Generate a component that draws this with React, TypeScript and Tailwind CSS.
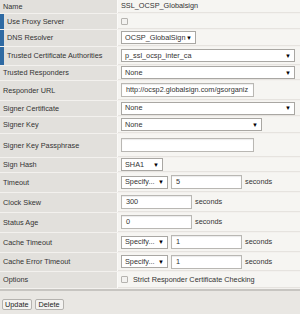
import React from 'react';

const font = { fontFamily: '"Liberation Sans", Arial, sans-serif' };

function Sel({ text, w }: { text: string; w: string }) {
  return (
    <div className={`${w} h-[13px] bg-white border border-[#a9a7a3] flex items-center justify-between pl-[3px] pr-[3px]`}>
      <span className="whitespace-nowrap leading-[10px]">{text}</span>
      <span className="text-[6px] leading-none text-black">▼</span>
    </div>
  );
}

function Inp({ value, w }: { value: string; w: string }) {
  return (
    <div className={`${w} h-[14px] bg-white border border-[#b9b7b3] shadow-[inset_0_1px_1px_rgba(0,0,0,0.08)] flex items-center pl-[4px] overflow-hidden whitespace-nowrap leading-[10px]`}>
      {value}
    </div>
  );
}

function Box() {
  return <div className="w-[7px] h-[7px] border border-[#b5b3af] bg-[#f3f2f0] rounded-[1px]" />;
}

function Row({ label, h, accent, children }: { label: string; h: string; accent?: boolean; children: React.ReactNode }) {
  return (
    <div className={`flex ${h} border-b border-[#f3f1ee]`}>
      <div className="w-[118px] flex bg-[#e2e0dc] border-r border-[#fbfaf8]">
        {accent && <div className="w-[4px] bg-[#2f6aa3]" />}
        <div className="flex items-center pl-[3px] leading-[10px]">{label}</div>
      </div>
      <div className="flex-1 flex items-center gap-[3px] pl-[3px] bg-[#f6f5f2] border-b border-[#e6e3df] leading-[10px]">{children}</div>
    </div>
  );
}

export default function App() {
  return (
    <div className="w-[300px] h-[314px] bg-[#e9e7e3] text-[7.3px] text-[#333] leading-none" style={font}>
      <div className="border-b-[2px] border-[#c7c5c1]">
        <Row label="Name" h="h-[14px]">
          <span>SSL_OCSP_Globalsign</span>
        </Row>
        <Row label="Use Proxy Server" h="h-[16px]" accent>
          <Box />
        </Row>
        <Row label="DNS Resolver" h="h-[17px]" accent>
          <Sel text="OCSP_GlobalSign" w="w-[75px]" />
        </Row>
        <Row label="Trusted Certificate Authorities" h="h-[19px]" accent>
          <Sel text="p_ssl_ocsp_inter_ca" w="w-[174px]" />
        </Row>
        <Row label="Trusted Responders" h="h-[15px]">
          <Sel text="None" w="w-[174px]" />
        </Row>
        <Row label="Responder URL" h="h-[20px]">
          <Inp value="http://ocsp2.globalsign.com/gsorganiz" w="w-[133px]" />
        </Row>
        <Row label="Signer Certificate" h="h-[16px]">
          <Sel text="None" w="w-[174px]" />
        </Row>
        <Row label="Signer Key" h="h-[17px]">
          <Sel text="None" w="w-[141px]" />
        </Row>
        <Row label="Signer Key Passphrase" h="h-[24px]">
          <Inp value="" w="w-[133px]" />
        </Row>
        <Row label="Sign Hash" h="h-[15px]">
          <Sel text="SHA1" w="w-[42px]" />
        </Row>
        <Row label="Timeout" h="h-[20px]">
          <Sel text="Specify..." w="w-[47px]" />
          <Inp value="5" w="w-[71px]" />
          <span>seconds</span>
        </Row>
        <Row label="Clock Skew" h="h-[20px]">
          <Inp value="300" w="w-[71px]" />
          <span>seconds</span>
        </Row>
        <Row label="Status Age" h="h-[20px]">
          <Inp value="0" w="w-[71px]" />
          <span>seconds</span>
        </Row>
        <Row label="Cache Timeout" h="h-[20px]">
          <Sel text="Specify..." w="w-[47px]" />
          <Inp value="1" w="w-[71px]" />
          <span>seconds</span>
        </Row>
        <Row label="Cache Error Timeout" h="h-[19px]">
          <Sel text="Specify..." w="w-[47px]" />
          <Inp value="1" w="w-[71px]" />
          <span>seconds</span>
        </Row>
        <Row label="Options" h="h-[17px]">
          <Box />
          <span className="ml-[2px]">Strict Responder Certificate Checking</span>
        </Row>
      </div>
      <div className="flex gap-[3px] pl-[2px] pt-[8px]">
        <button className="h-[11px] px-[2px] bg-[#f4f3f1] border border-[#b4b2ae] rounded-[2px] text-[#222] leading-none">Update</button>
        <button className="h-[11px] px-[3px] bg-[#f4f3f1] border border-[#b4b2ae] rounded-[2px] text-[#222] leading-none">Delete</button>
      </div>
    </div>
  );
}
